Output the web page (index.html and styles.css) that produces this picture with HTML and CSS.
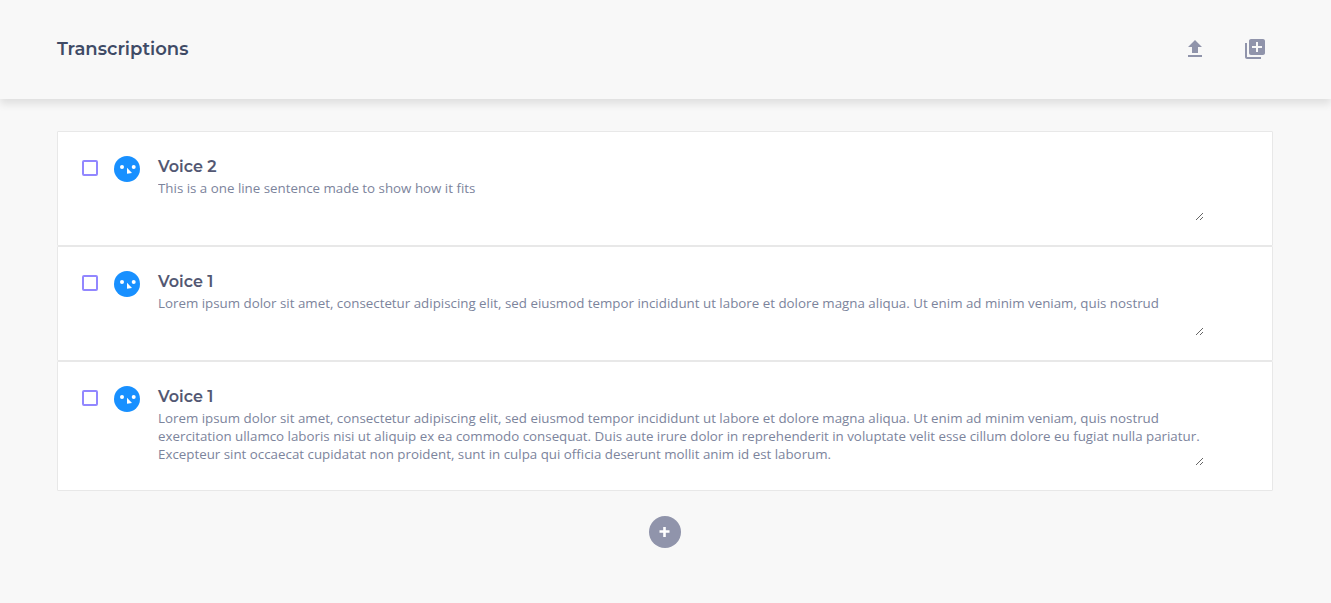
FILE: index.html
```html
<!DOCTYPE html>
<html lang="en">
<head>
<meta charset="utf-8">
<meta name="viewport" content="width=device-width, initial-scale=1">
<title>Transcriptions</title>
<link rel="stylesheet" href="styles.css">
</head>
<body>
<svg class="sprite" aria-hidden="true">
  <symbol id="face" viewBox="0 0 26 26">
    <circle cx="13" cy="13" r="13" fill="#1890ff"/>
    <circle cx="8" cy="11" r="2" fill="#fff"/>
    <circle cx="19.700" cy="11" r="2" fill="#fff"/>
    <path d="M13 11.700v6l5-.700z" fill="#fff"/>
  </symbol>
</svg>
<header class="header">
  <h1 class="title">Transcriptions</h1>
  <div class="actions">
    <button class="icon-button" type="button" aria-label="Upload">
      <svg width="24" height="24" viewBox="0 0 24 24" fill="currentColor"><path d="M9 16h6v-6h4l-7-7-7 7h4zm-4 2h14v2H5z"/></svg>
    </button>
    <button class="icon-button" type="button" aria-label="Add to library">
      <svg width="24" height="24" viewBox="0 0 24 24" fill="currentColor"><path d="M4 6H2v14c0 1.100.900 2 2 2h14v-2H4V6zm16-4H8c-1.100 0-2 .900-2 2v12c0 1.100.900 2 2 2h12c1.100 0 2-.900 2-2V4c0-1.100-.900-2-2-2zm-1 9h-4v4h-2v-4H9V9h4V5h2v4h4v2z"/></svg>
    </button>
  </div>
</header>
<main class="main">
  <article class="card">
    <input class="check" type="checkbox" aria-label="Select transcription 1">
    <svg class="avatar" aria-hidden="true"><use href="#face"/></svg>
    <div class="content">
      <h2 class="voice" id="voice-1">Voice 2</h2>
      <textarea class="text" aria-labelledby="voice-1" spellcheck="false">This is a one line sentence made to show how it fits</textarea>
    </div>
  </article>
  <article class="card">
    <input class="check" type="checkbox" aria-label="Select transcription 2">
    <svg class="avatar" aria-hidden="true"><use href="#face"/></svg>
    <div class="content">
      <h2 class="voice" id="voice-2">Voice 1</h2>
      <textarea class="text" aria-labelledby="voice-2" spellcheck="false">Lorem ipsum dolor sit amet, consectetur adipiscing elit, sed eiusmod tempor incididunt ut labore et dolore magna aliqua. Ut enim ad minim veniam, quis nostrud</textarea>
    </div>
  </article>
  <article class="card">
    <input class="check" type="checkbox" aria-label="Select transcription 3">
    <svg class="avatar" aria-hidden="true"><use href="#face"/></svg>
    <div class="content">
      <h2 class="voice" id="voice-3">Voice 1</h2>
      <textarea class="text text-long" aria-labelledby="voice-3" spellcheck="false">Lorem ipsum dolor sit amet, consectetur adipiscing elit, sed eiusmod tempor incididunt ut labore et dolore magna aliqua. Ut enim ad minim veniam, quis nostrud exercitation ullamco laboris nisi ut aliquip ex ea commodo consequat. Duis aute irure dolor in reprehenderit in voluptate velit esse cillum dolore eu fugiat nulla pariatur. Excepteur sint occaecat cupidatat non proident, sunt in culpa qui officia deserunt mollit anim id est laborum.</textarea>
    </div>
  </article>
  <button class="add" type="button" aria-label="Add transcription">
    <svg width="32" height="32" viewBox="0 0 32 32"><path d="M15.500 11v10M10.500 15.500h10" stroke="#fff" stroke-width="2.600"/></svg>
  </button>
</main>
</body>
</html>
```
FILE: styles.css
```css
* {
  box-sizing: border-box;
}

body {
  margin: 0;
  background: #f8f8f8;
  font-family: "Open Sans", sans-serif;
}

.sprite {
  display: none;
}

.header {
  display: flex;
  align-items: center;
  justify-content: space-between;
  padding: 25px 52px 26px 57px;
  box-shadow: 0 5px 8px rgba(0, 0, 0, 0.1);
  background: #f8f8f8;
}

.title,
.voice {
  margin: 0;
  font-family: Montserrat, Inter, sans-serif;
  font-weight: 600;
}

.title {
  color: #3f4b66;
  font-size: 18px;
  line-height: 24px;
}

.actions {
  display: flex;
  gap: 12px;
}

.icon-button {
  display: flex;
  padding: 12px;
  border: 0;
  background: none;
  color: #9094ab;
}

.main {
  display: flex;
  flex-direction: column;
  padding: 32px 58px 32px 57px;
}

.card {
  display: flex;
  padding: 23px 68px 24px 24px;
  border: 1px solid #e8e8e8;
  border-radius: 1px;
  background: #fff;
}

.check {
  appearance: none;
  flex: none;
  width: 16px;
  height: 16px;
  margin: 5px 16px 0 0;
  border: 2px solid #9287ff;
  border-radius: 2px;
}

.check:checked {
  background: #9287ff;
}

.avatar {
  flex: none;
  width: 26px;
  height: 26px;
  margin: 1px 18px 0 0;
}

.content {
  flex: 1;
  min-width: 0;
}

.voice {
  color: #535873;
  font-size: 16px;
  line-height: 24px;
}

.text {
  display: block;
  width: 100%;
  height: 42px;
  padding: 0;
  border: 0;
  outline: 0;
  overflow: hidden;
  background: none;
  color: #7c849c;
  font-family: "Open Sans", sans-serif;
  line-height: 18px;
}

.text-long {
  height: 57px;
}

.add {
  align-self: center;
  display: flex;
  margin-top: 25px;
  padding: 0;
  border: 0;
  border-radius: 50%;
  background: #9094ab;
}
```
